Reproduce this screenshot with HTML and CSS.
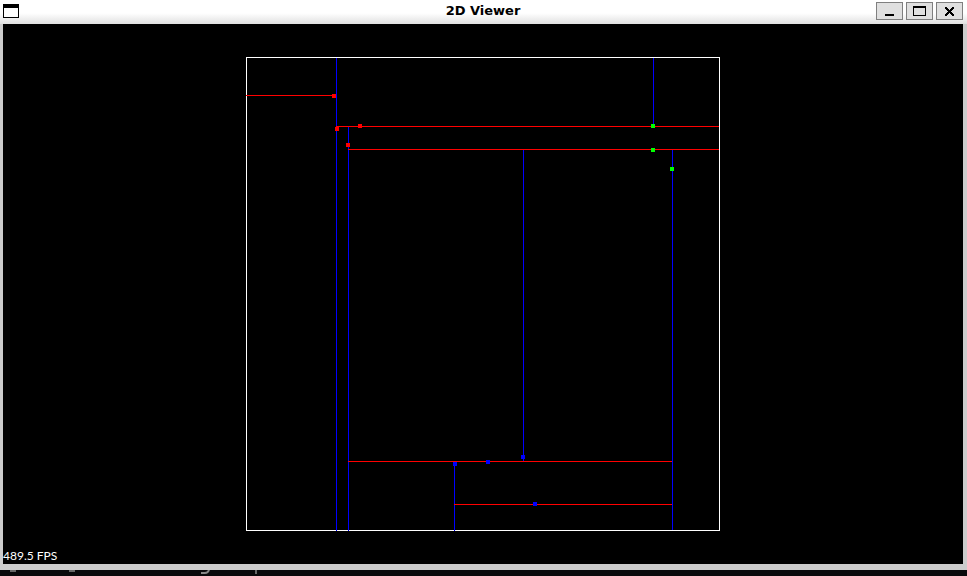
FILE: index.html
```
<!DOCTYPE html>
<html lang="en">
<head>
<meta charset="utf-8">
<title>2D Viewer</title>
<link rel="stylesheet" href="styles.css">
</head>
<body>
<main class="window">
  <header class="titlebar">
    <svg class="app-icon" width="16" height="14" viewBox="0 0 16 14" shape-rendering="crispEdges" aria-hidden="true"><path fill="#000" d="M0 0h16v14H0z"/><path fill="#fff" d="M1 4h14v9H1z"/></svg>
    <h1 class="title">2D Viewer</h1>
    <div class="controls">
      <button type="button" class="control" aria-label="Minimize"><svg width="25" height="16" viewBox="0 0 25 16" shape-rendering="crispEdges"><path d="M8 11h9v2H8z"/></svg></button>
      <button type="button" class="control" aria-label="Maximize"><svg width="25" height="16" viewBox="0 0 25 16" shape-rendering="crispEdges"><path fill-rule="evenodd" d="M6 3h13v10H6zM7 5v7h11V5z"/></svg></button>
      <button type="button" class="control" aria-label="Close"><svg width="25" height="16" viewBox="0 0 25 16" shape-rendering="crispEdges"><path d="M8 4h2v1h1v1h1v1h1V6h1V5h1V4h2v2h-1v1h-1v1h-1v1h1v1h1v1h1v2h-2v-1h-1v-1h-1v-1h-1v1h-1v1h-1v1H8v-2h1v-1h1V9h1V8h-1V7H9V6H8z"/></svg></button>
    </div>
  </header>
  <section class="viewport">
    <svg class="scene" width="474" height="474" viewBox="246 57 474 474" shape-rendering="crispEdges" role="img" aria-label="Partitioned plane with sample points">
      <path fill="#fff" fill-rule="evenodd" d="M246 57h474v474H246zM247 58v472h472V58z"/>
      <g fill="#00f">
        <path d="M336 58h1v473h-1zM348 127h1v404h-1zM653 58h1v68h-1zM672 150h1v380h-1zM523 150h1v311h-1zM454 462h1v69h-1z"/>
      </g>
      <g fill="#f00">
        <path d="M246 95h90v1h-90zM336 126h383v1H336zM348 149h371v1H348zM348 461h324v1H348zM454 504h218v1H454z"/>
        <path d="M332 94h4v4h-4zM335 127h4v4h-4zM358 124h4v4h-4zM346 143h4v4h-4z"/>
      </g>
      <path fill="#0f0" d="M651 124h4v4h-4zM651 148h4v4h-4zM670 167h4v4h-4z"/>
      <path fill="#00f" d="M453 462h4v4h-4zM486 460h4v4h-4zM521 455h4v4h-4zM533 502h4v4h-4z"/>
    </svg>
    <p class="fps">489.5 FPS</p>
  </section>
</main>
<div class="backdrop" aria-hidden="true">
  <svg width="270" height="6" viewBox="0 0 270 6"><path fill="#686868" d="M10 0h6v2h-6zM69 0h6v2h-6zM255 0h2v4h-2z"/><path d="M201 3h4q3 0 4-3" fill="none" stroke="#888" stroke-width="2"/></svg>
</div>
</body>
</html>
```
FILE: styles.css
```
* {
  box-sizing: border-box;
}

body {
  margin: 0;
  min-height: 100vh;
  display: flex;
  flex-direction: column;
  background: #0a0a0c;
  overflow: hidden;
}

.window {
  flex: 1;
  display: flex;
  flex-direction: column;
  background: #ccc;
}

.titlebar {
  display: grid;
  grid-template-columns: 1fr auto 1fr;
  height: 24px;
  padding: 0 4px 0 3px;
  background: linear-gradient(#fff 0, #fff 55%, #e0e0e0 100%);
}

.app-icon {
  margin-top: 4px;
}

.title {
  margin: 0;
  font: bold 13px/22px "DejaVu Sans", sans-serif;
  color: #000;
}

.controls {
  display: flex;
  justify-content: flex-end;
  gap: 3px;
  padding-top: 2px;
}

.control {
  width: 27px;
  height: 18px;
  padding: 0;
  border: 1px solid #808080;
  background: #e0e0e0;
}

.control svg {
  display: block;
}

.viewport {
  flex: 1;
  display: flex;
  flex-direction: column;
  align-items: center;
  margin: 0 4px 6px 3px;
  padding-top: 33px;
  background: #000;
}

.scene {
  display: block;
}

.fps {
  align-self: flex-start;
  margin: auto 0 0;
  font: 12px/16px Lato, sans-serif;
  color: #fff;
}

.backdrop {
  height: 6px;
}

.backdrop svg {
  display: block;
}
```
